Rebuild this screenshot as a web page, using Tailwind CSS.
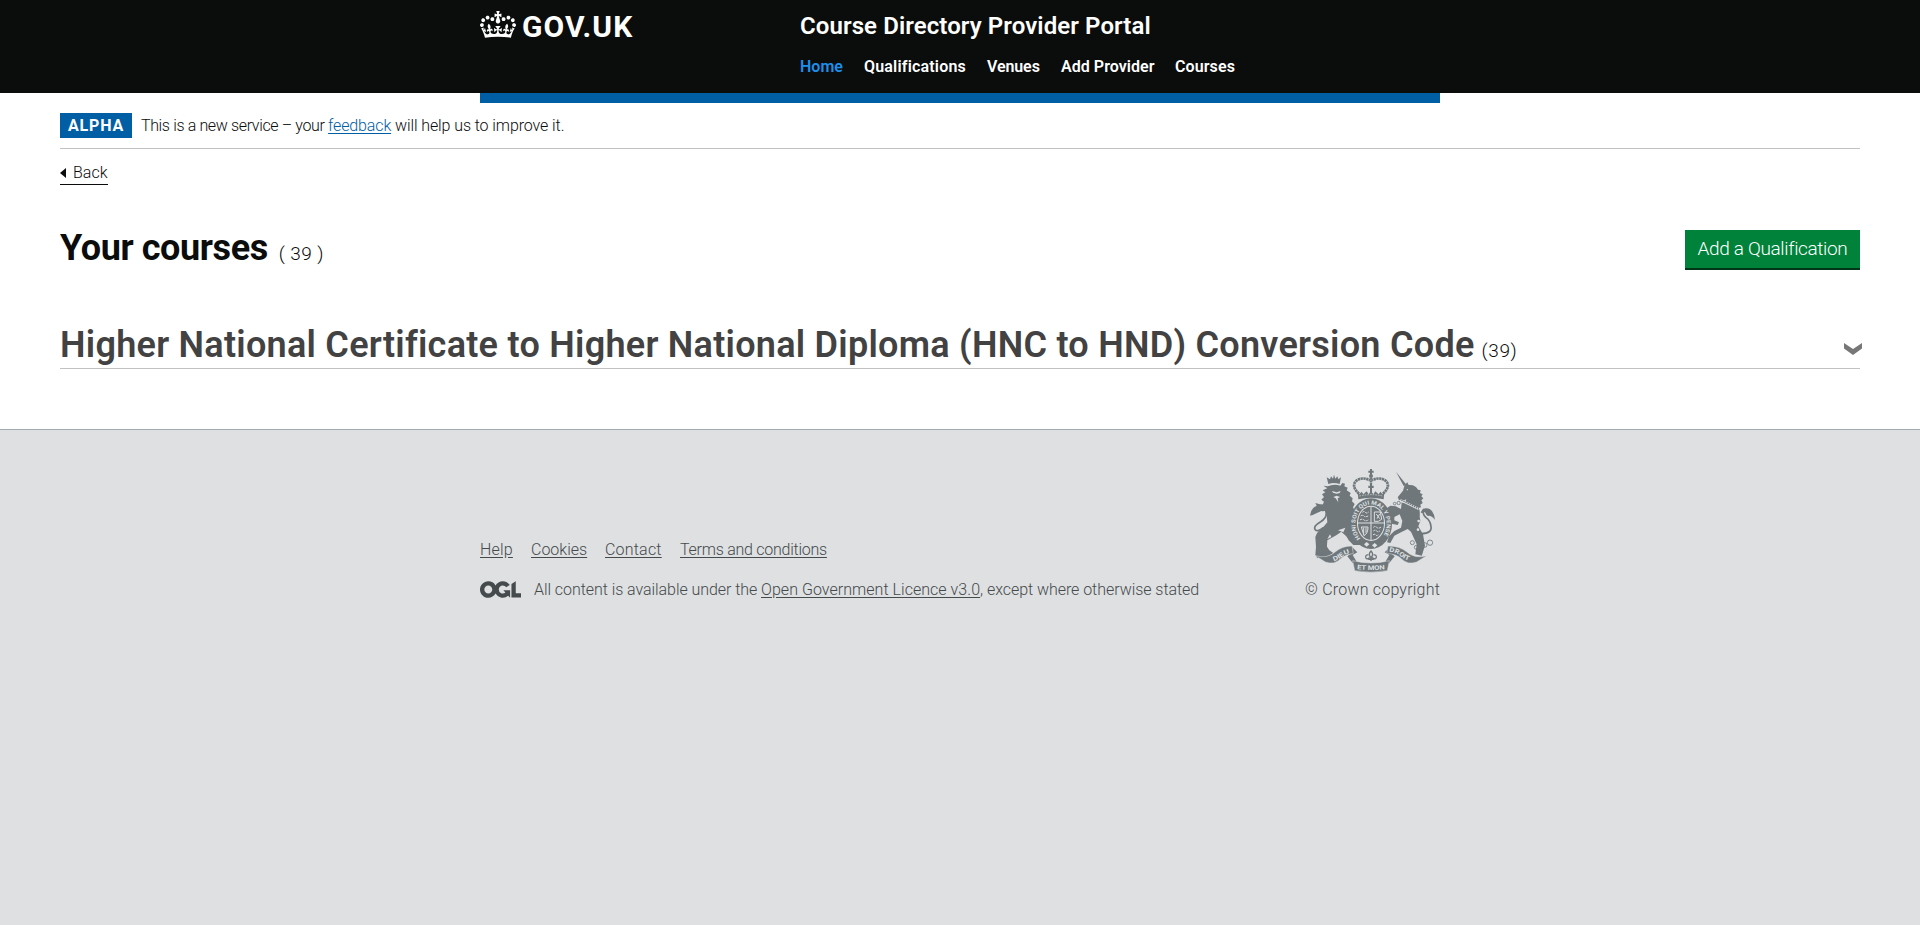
<!DOCTYPE html>
<html lang="en">
<head>
<meta charset="utf-8">
<title>Your courses - Course Directory Provider Portal</title>
<script src="https://cdn.jsdelivr.net/npm/@tailwindcss/browser@4"></script>
</head>
<body class="min-h-screen flex flex-col bg-white font-['Roboto','Liberation_Sans',sans-serif] text-[#0b0c0c] whitespace-nowrap">

<header class="bg-[#0b0c0c] text-white h-[93px] shrink-0">
  <div class="w-[960px] mx-auto flex">
    <a href="#" class="w-80 flex items-start pt-[11px]">
      <svg class="w-9 h-[27px]" viewBox="0 0 132 97" preserveAspectRatio="none" fill="currentColor" fill-rule="evenodd" aria-hidden="true">
        <path d="M25 30.2c3.5 1.5 7.7-.2 9.1-3.7 1.5-3.6-.2-7.8-3.9-9.2-3.6-1.4-7.6.3-9.1 3.9-1.4 3.5.3 7.5 3.9 9zM9 39.5c3.6 1.5 7.8-.2 9.2-3.7 1.5-3.6-.2-7.8-3.9-9.1-3.6-1.5-7.6.2-9.1 3.8-1.4 3.5.3 7.5 3.8 9zM4.4 57.2c3.5 1.5 7.7-.2 9.1-3.8 1.5-3.6-.2-7.7-3.9-9.1-3.5-1.5-7.6.3-9.1 3.8-1.4 3.5.3 7.6 3.9 9.1zm38.3-21.4c3.5 1.5 7.7-.2 9.1-3.8 1.5-3.6-.2-7.7-3.9-9.1-3.6-1.5-7.6.3-9.1 3.8-1.3 3.6.4 7.7 3.9 9.1zm64.4-5.6c-3.6 1.5-7.8-.2-9.1-3.7-1.5-3.6.2-7.8 3.8-9.2 3.6-1.4 7.7.3 9.2 3.9 1.3 3.5-.4 7.5-3.9 9zm15.9 9.3c-3.6 1.5-7.7-.2-9.1-3.7-1.5-3.6.2-7.8 3.7-9.1 3.6-1.5 7.7.2 9.2 3.8 1.5 3.5-.3 7.5-3.8 9zm4.7 17.7c-3.6 1.5-7.8-.2-9.2-3.8-1.5-3.6.2-7.7 3.9-9.1 3.6-1.5 7.7.3 9.2 3.8 1.3 3.5-.4 7.6-3.9 9.1zM89.3 35.8c-3.6 1.5-7.8-.2-9.2-3.8-1.4-3.6.2-7.7 3.9-9.1 3.6-1.5 7.7.3 9.2 3.8 1.4 3.6-.3 7.7-3.9 9.1zM69.7 17.7l8.9 4.7V9.3l-8.9 2.8c-.2-.3-.5-.6-.9-.9L72.4 0H59.6l3.5 11.2c-.3.3-.6.5-.9.9l-8.8-2.8v13.1l8.8-4.7c.3.3.6.7.9.9l-5 15.4v.1c-.2.8-.4 1.6-.4 2.4 0 4.1 3.1 7.5 7 8.1h.2c.3 0 .7.1 1 .1.4 0 .7 0 1-.1h.2c4-.6 7.1-4.1 7.1-8.1 0-.8-.1-1.7-.4-2.4V34l-5.1-15.4c.4-.2.7-.6 1-.9zM66 92.8c16.9 0 32.8 1.1 47.1 3.2 4-16.9 8.9-26.7 14-33.5l-9.6-3.4c1 4.9 1.1 7.2 0 10.2-1.5-1.4-3-4.3-4.2-8.7L108.6 76c2.8-2 5-3.2 7.5-3.3-4.4 9.4-10 11.9-13.6 11.2-4.3-.8-6.3-4.6-5.6-7.9 1-4.7 5.7-5.9 8-.5 4.3-8.7-3-11.4-7.6-8.8 7.1-7.2 7.9-13.5 2.1-21.1-8 6.1-8.1 12.3-4.5 20.8-4.7-5.4-12.1-2.5-9.5 6.2 3.4-5.2 7.9-2 7.2 3.1-.6 4.3-6.4 7.8-13.5 7.2-10.3-.9-10.9-8-11.2-13.8 2.5-.5 7.1 1.8 11 7.3L80.2 60c-4.1 4.4-8 5.3-12.3 5.4 1.4-4.4 8-11.6 8-11.6H55.5s6.4 7.2 7.9 11.6c-4.2-.1-8-1-12.3-5.4l1.4 16.4c3.9-5.5 8.5-7.7 10.9-7.3-.3 5.8-.9 12.8-11.1 13.8-7.2.6-12.9-2.9-13.5-7.2-.7-5 3.8-8.3 7.1-3.1 2.7-8.7-4.6-11.6-9.4-6.2 3.7-8.5 3.6-14.7-4.6-20.8-5.8 7.6-5 13.9 2.2 21.1-4.7-2.6-11.9.1-7.7 8.8 2.3-5.5 7.1-4.2 8.1.5.7 3.3-1.3 7.1-5.7 7.9-3.5.7-9-1.8-13.5-11.2 2.5.1 4.7 1.3 7.5 3.3l-4.7-15.4c-1.2 4.4-2.7 7.2-4.3 8.7-1.1-3-.9-5.3 0-10.2l-9.5 3.4c5 6.9 9.9 16.7 14 33.5 14.8-2.1 30.8-3.2 47.7-3.2z"/>
      </svg>
      <span class="ml-[6px] text-[30px] leading-[31px] font-bold tracking-[1.1px]">GOV.UK</span>
    </a>
    <div class="pt-[11px]">
      <div class="text-2xl leading-[30px] font-semibold tracking-[0.09px]">Course Directory Provider Portal</div>
      <nav class="flex mt-4 text-base leading-5 font-semibold">
        <a href="#" class="w-16 text-[#1d8feb] tracking-[0.02px]">Home</a>
        <a href="#" class="w-[123px] tracking-[0.18px]">Qualifications</a>
        <a href="#" class="w-[74px] tracking-[-0.1px]">Venues</a>
        <a href="#" class="w-[114px] tracking-[0.05px]">Add Provider</a>
        <a href="#" class="tracking-[0.1px]">Courses</a>
      </nav>
    </div>
  </div>
</header>

<main class="h-[336px] shrink-0 px-[60px]">
  <div class="w-[960px] h-[10px] mx-auto bg-[#005ea5]"></div>
  <div class="pt-[10px] h-[46px] border-b border-[#bfc1c3] flex items-start">
    <strong class="w-[72px] h-[25px] bg-[#005ea5] text-white text-base leading-[25px] font-bold text-center tracking-[0.8px]">ALPHA</strong>
    <span class="ml-[9px] text-base leading-[25px] font-light whitespace-pre"><span class="tracking-[-0.36px]">This is a new service – your </span><a href="#" class="text-[#005ea5] underline underline-offset-2 tracking-[-0.14px]">feedback</a><span class="tracking-[-0.09px]"> will help us to improve it.</span></span>
  </div>
  <a href="#" class="mt-[13px] w-12 h-[23px] border-b border-[#0b0c0c] flex items-start text-base leading-5 font-light">
    <svg class="w-[6px] h-[10px] mt-[6px] mr-[7px]" viewBox="0 0 6 10" fill="#0b0c0c" aria-hidden="true"><path d="M0 5 6 0v10z"/></svg>
    <span class="mt-px">Back</span>
  </a>
  <div class="mt-[45px] h-10 flex justify-between items-start">
    <h1 class="text-4xl leading-[36px] font-bold tracking-[-0.4px]">Your courses<span class="ml-[11px] text-[19px] font-light tracking-[0.4px]">( 39 )</span></h1>
    <a href="#" class="w-[175px] h-10 bg-[#00823b] border-b-2 border-[#003618] text-white text-[19px] leading-[38px] font-light text-center tracking-[-0.35px]">Add a Qualification</a>
  </div>
  <div class="mt-[51px] h-[48px] border-b border-[#bfc1c3] flex justify-between items-start">
    <h2 class="text-4xl leading-[48px] font-semibold text-[#424243] tracking-[0.27px]">Higher National Certificate to Higher National Diploma (HNC to HND) Conversion Code<span class="ml-[7px] text-[19px] font-light text-[#0b0c0c] tracking-[0.6px]">(39)</span></h2>
    <svg class="w-[18px] h-3 mt-[22px] -mr-[2px]" viewBox="0 0 18 12" fill="#777" aria-hidden="true"><path d="M0 0l9 6 9-6v5.500l-9 6.500-9-6.500z"/></svg>
  </div>
</main>

<footer class="flex-1 bg-[#dee0e2] border-t border-[#a1acb2] text-[#454a4c] text-base font-light">
  <div class="w-[960px] mx-auto pt-[39px] flex justify-between items-end">
    <div>
      <div class="flex leading-5 mb-5">
        <a href="#" class="w-[51px]"><span class="underline underline-offset-2 tracking-[0.2px]">Help</span></a>
        <a href="#" class="w-[74px]"><span class="underline underline-offset-2">Cookies</span></a>
        <a href="#" class="w-[75px]"><span class="underline underline-offset-2 tracking-[0.2px]">Contact</span></a>
        <a href="#"><span class="underline underline-offset-2 tracking-[-0.25px]">Terms and conditions</span></a>
      </div>
      <div class="flex items-start leading-5">
        <svg class="w-[41px] h-[17px] mt-px mr-[13px]" viewBox="0 0 483.2 195.700" fill="currentColor" aria-hidden="true"><path d="M421.500 142.800V.1l-50.700 32.300v161.100h112.400v-50.700zm-122.300-9.600A47.120 47.120 0 0 1 221 97.800c0-26 21.100-47.100 47.100-47.100 16.700 0 31.400 8.700 39.700 21.800l42.700-27.200A97.630 97.630 0 0 0 268.100 0c-36.500 0-68.300 20.100-85.100 49.700A98 98 0 0 0 97.800 0C43.900 0 0 43.900 0 97.800s43.900 97.800 97.800 97.800c36.500 0 68.300-20.100 85.100-49.700a97.760 97.760 0 0 0 149.600 25.400l19.400 22.200h3v-87.800h-80l24.300 27.500zM97.800 145c-26 0-47.100-21.100-47.100-47.100s21.100-47.100 47.100-47.100 47.100 21.100 47.100 47.100S123.800 145 97.800 145"/></svg>
        <span class="whitespace-pre"><span class="tracking-[-0.06px]">All content is available under the </span><a href="#" class="underline underline-offset-2 tracking-[0.04px]">Open Government Licence v3.0</a><span class="tracking-[-0.05px]">, except where otherwise stated</span></span>
      </div>
    </div>
    <div class="flex flex-col items-end">
      <svg class="w-[125px] h-[103px] mr-[5px] overflow-visible" viewBox="60 28 375 309" text-rendering="geometricPrecision" aria-hidden="true">
        <g fill="#6f777b">
          <!-- lion -->
          <path d="M115 73l-5-20 10 6 3-9 6 7 3-12 4 12 6-7 3 9 8-6-4 20q-17-6-34 0z"/>
          <path d="M113 80q18-8 38-2l6-8 8 2-2 8 10 4-3 8 12 8-3 8 9 8-2 9 8 8-5 10 5 10-4 9-6 12 8 18-8 14 12 40-6 6-12-14-24-22-14 10-28 16-2 30-4 10 4 10-18 0-10 4-6-10 2-24-2-30q4-16 24-30l12-14-2-22-6-24-8-2 6-14-8-6 8-8-6-8 10-6-8-6 14-6-12-8z"/>
          <path d="M160 206l22 10 8 22 20 6 0 12-20 0-14-14-10-18-12-8z"/>
          <path d="M82 260l-4 16 8 12 12-6 8 8 10-2 14-8-12-8-8-12z"/>
          <!-- lion tail -->
          <path d="M60 168q2-22 20-30l-4-8 14 4q18-2 20 18-10 4-16 2l-26 12z"/>
          <path d="M104 146q14 24-12 40-24 14-16 24 6 8 24-6" fill="none" stroke="#6f777b" stroke-width="5"/>
          <!-- unicorn -->
          <path d="M318 36l30 38-7 5zM344 76l8-8 4 8q20-2 28 14l8 2-2 8 8 4-4 6 6 6-6 6 4 8-7 5 2 8-8 2-44-6 8-20-10 4-12-2-4-8 16-20z"/>
          <path d="M335 128l50 14q6 12 4 28l2 14-6 16 14 24 6 34-8 24-8-2 2-28-16-26-22-18-20 10-20 10-12 22-10-2 6-18 16-16 20-10 4-20-8-20-16 8 0 10 14 6-4 8-18-4-4-18-16-14 2-12 14-10 16 2 16 8z"/>
          <path d="M362 214l18 40-4 30 20 4 4-34-12-46z"/>
          <!-- unicorn tail -->
          <path d="M392 222q38 0 30-26-2-14-14-22-14-14-6-26" fill="none" stroke="#6f777b" stroke-width="5"/>
          <path d="M392 160q4-16 18-14 20 0 25 34-10-12-18-12-6 4-12-10z"/>
        </g>
        <g fill="#dee0e2">
          <path d="M126 94l14 4 12-4-3 6-9 2-11-3zM130 112l10-4 10 4-7 4 2 12-8-12z"/><circle cx="352" cy="90" r="2"/>
          <path d="M332 118l54 26-1 7-54-26z"/><circle cx="340" cy="126" r="3"/>
          <path d="M144 212l22-8-6 14zM124 232l-12 6 8-14z"/>
          <circle cx="386" cy="184" r="4"/><circle cx="384" cy="210" r="4"/>
        </g>
        <!-- collar and chain -->
        <g fill="none" stroke="#6f777b" stroke-width="2.500">
          <path d="M334 121l52 26" stroke-width="4" stroke-dasharray="4 3"/>
          <circle cx="326" cy="130" r="5"/><circle cx="314" cy="132" r="4"/>
          <circle cx="367" cy="249" r="6"/><circle cx="379" cy="263" r="6"/><circle cx="404" cy="256" r="7"/><circle cx="420" cy="249" r="8"/>
        </g>
        <!-- crown -->
        <g fill="#6f777b">
          <path d="M240 28h6v5h5v6h-5v6h-6v-6h-5v-6h5z"/><circle cx="243" cy="49" r="6"/>
          <path d="M203 96l5 8 7-8 5 8 10-9 6 9 7-10 7 10 6-9 10 9 5-8 7 8 5-8-2 23q-39-9-76 0z"/>
          <path d="M235 78h5v-8h6v8h5v7h-5v12h-6v-12h-5z"/>
        </g>
        <path d="M207 102q-24-22-9-38 18-14 42-2M279 102q24-22 9-38-18-14-42-2" fill="none" stroke="#6f777b" stroke-width="8" stroke-dasharray="7 1.500"/>
        <path d="M243 54v20" stroke="#6f777b" stroke-width="7" stroke-dasharray="6 1.500"/>
        <path d="M208 109q35-8 70 0" fill="none" stroke="#dee0e2" stroke-width="2" stroke-dasharray="5 3"/>
        <!-- garter -->
        <ellipse cx="243" cy="192" rx="63" ry="76" fill="#6f777b"/>
        <ellipse cx="243" cy="191" rx="42" ry="53" fill="#dee0e2"/>
        <path id="garter" d="M212 236A47 58 0 1 1 274 236" fill="none"/>
        <text class="font-bold text-[17px]" fill="#dee0e2"><textPath href="#garter" textLength="248" lengthAdjust="spacingAndGlyphs">HONI SOIT QUI MAL Y PENSE</textPath></text>
        <path d="M222 254l8-7 8 7-8 7zM246 257l8-7 8 7-8 7z" fill="#dee0e2"/>
        <!-- quartered shield -->
        <ellipse cx="243" cy="191" rx="39" ry="50" fill="#6f777b"/>
        <path d="M243 141v100M204 190h78" stroke="#dee0e2" stroke-width="3"/>
        <g fill="none" stroke="#dee0e2" stroke-width="3">
          <path d="M217 158q5-5 9 0t10-1M212 169q6-5 10 0t14-1M210 181q6-5 12 0t14-1" stroke-dasharray="7 2"/>
          <path d="M253 157h18l4 22-10 6h-12zM259 163l10 14M269 163l-8 14"/>
          <path d="M214 202h20q0 20-12 26zM221 204v20M228 204v16"/>
          <path d="M250 203q5-5 10 0t14-1M250 214q5-5 10 0t10-1M249 226q5-5 9 0t7-1" stroke-dasharray="7 2"/>
        </g>
        <!-- motto ribbon -->
        <path d="M186 262l16 16-14 8 12 20-10 6-18-22 16-14zM300 262l-16 16 14 8-12 20 10 6 18-22-16-14z" fill="#6f777b"/>
        <g fill="#6f777b" stroke="#dee0e2" stroke-width="1.500">
          <path d="M76 288q36 10 58-10 24-20 52-19l4 22q-24 4-38 16-20 20-46 10z"/>
          <path d="M410 288q-36 10-58-10-24-20-58-19l-4 22q30 3 44 16 20 20 46 10z"/>
          <path d="M188 303q55 14 110 0l-6 30q-49 9-98 0z"/>
        </g>
        <path id="mottoL" d="M131 304q16-4 27-14 12-9 34-12" fill="none"/>
        <path id="mottoR" d="M297 276q22 3 34 13 12 12 40 16" fill="none"/>
        <path id="mottoC" d="M201 328q42 6 90 0" fill="none"/>
        <g class="font-bold text-[19px]" fill="#dee0e2">
          <text><textPath href="#mottoL" textLength="54" lengthAdjust="spacingAndGlyphs">DIEU</textPath></text>
          <text><textPath href="#mottoR" textLength="66" lengthAdjust="spacingAndGlyphs">DROIT</textPath></text>
          <text><textPath href="#mottoC" textLength="84" lengthAdjust="spacingAndGlyphs">ET MON</textPath></text>
        </g>
        <!-- fleur-de-lis -->
        <g fill="none" stroke="#6f777b" stroke-width="4">
          <path d="M243 274q-10 10 0 20 10-10 0-20zM243 294v10M240 294q-12 8-13-2 0-8 8-6M246 294q12 8 13-2 0-8-8-6M235 299h16"/>
        </g>
      </svg>
      <a href="#" class="mt-2 leading-5 tracking-[0.2px]">© Crown copyright</a>
    </div>
  </div>
</footer>
</body>
</html>
